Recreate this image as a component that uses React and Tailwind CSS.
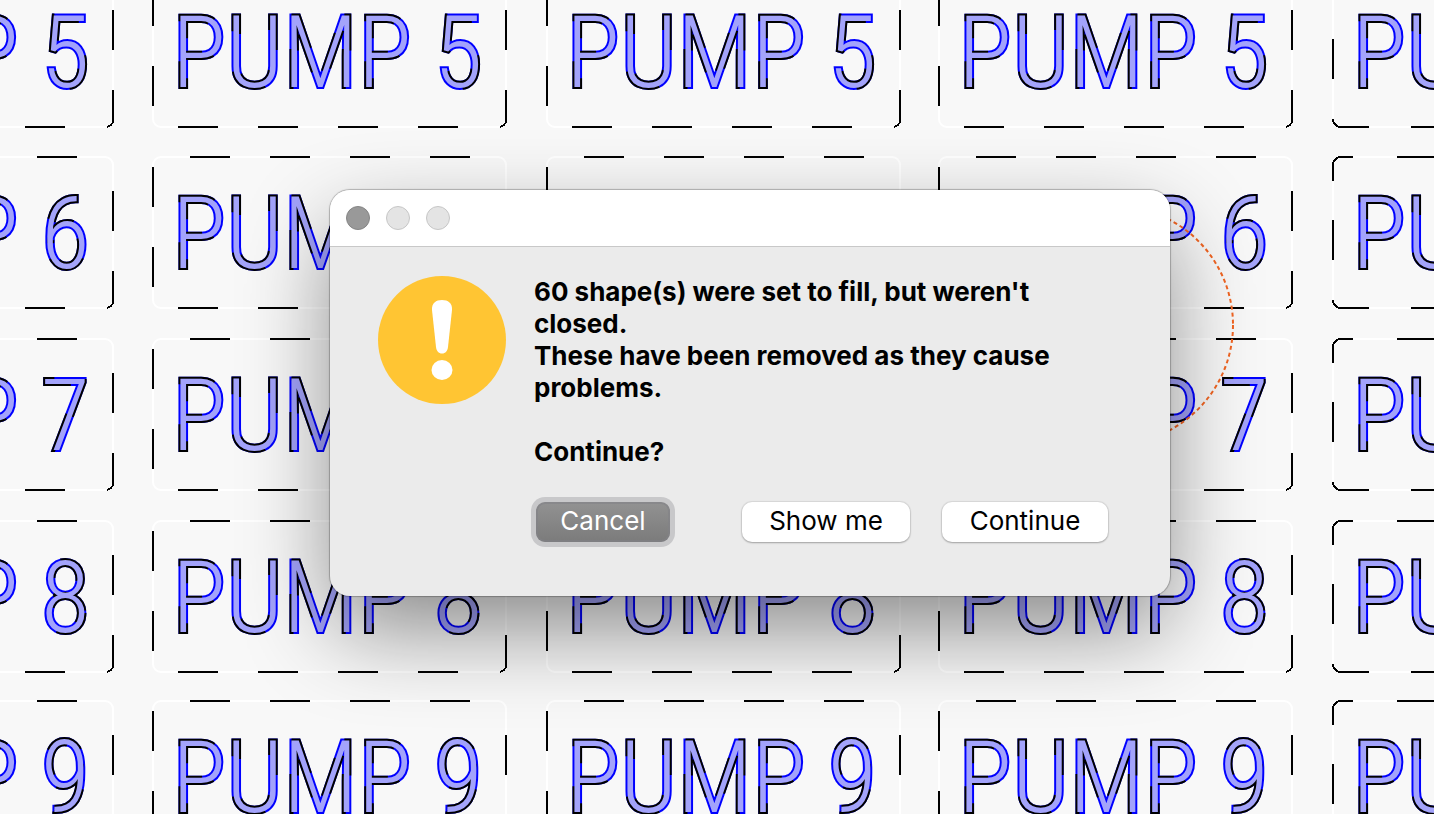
const COLUMNS = [-240, 153, 547, 939, 1333];
const ROWS = [
  { y: -24, label: "PUMP 5" },
  { y: 157, label: "PUMP 6" },
  { y: 339, label: "PUMP 7" },
  { y: 521, label: "PUMP 8" },
  { y: 701, label: "PUMP 9" },
];

// marching-ants segments of one plate outline
const ANTS = "M37 0H345M353 34V144A7 7 0 0 1 346 151M25 151H345M0 10V140";
const ANTS_LAST =
  "M0 24V8A8 8 0 0 1 8 0H24M64 0H353M0 63V103M0 143A8 8 0 0 0 8 151H38M78 151H353";

export default function App() {
  return (
    <main className="relative flex h-screen items-start justify-center overflow-hidden bg-[#f8f8f8] pt-[190px] pl-[66px] font-['Inter',sans-serif]">
      <Workspace />
      <AlertDialog />
    </main>
  );
}

function Workspace() {
  return (
    <svg className="absolute inset-0 h-full w-full" aria-label="Design canvas">
      {ROWS.map((row) =>
        COLUMNS.map((x, index) => (
          <Plate
            key={`${row.label}-${x}`}
            x={x}
            y={row.y}
            label={row.label}
            ants={index === COLUMNS.length - 1 ? ANTS_LAST : ANTS}
          />
        ))
      )}
      <circle
        cx="1114"
        cy="325"
        r="119"
        fill="none"
        stroke="#f26522"
        strokeWidth="2"
        strokeDasharray="4 3"
      />
    </svg>
  );
}

function Plate({ x, y, label, ants }) {
  return (
    <g transform={`translate(${x} ${y})`}>
      <rect
        width="353"
        height="151"
        rx="8"
        fill="none"
        stroke="#ffffff"
        strokeWidth="2"
      />
      <path
        d={ants}
        fill="none"
        stroke="#000000"
        strokeWidth="2"
        strokeDasharray="40 40"
        shapeRendering="crispEdges"
      />
      {/* fill goes over the strokes so overlapping contours stay hidden */}
      <g
        className="font-['Roboto_Condensed','Roboto',sans-serif] text-[100px] font-light"
        strokeWidth="4"
      >
        <text x="19" y="111" fill="none" stroke="#0000ff" aria-hidden="true">
          {label}
        </text>
        <text
          x="19"
          y="111"
          fill="#a3a3fb"
          stroke="#000000"
          strokeDasharray="40 40"
          paintOrder="stroke"
        >
          {label}
        </text>
      </g>
    </g>
  );
}

function AlertDialog() {
  return (
    <section
      role="alertdialog"
      aria-labelledby="alert-message"
      className="relative w-full max-w-[840px] overflow-hidden rounded-[20px] bg-[#ebebeb] shadow-[0_0_1px_1px_rgba(0,0,0,0.25),0_36px_90px_-4px_rgba(0,0,0,0.46)]"
    >
      <header className="flex h-14 items-center gap-4 bg-white px-4">
        <button
          aria-label="Close"
          className="size-6 rounded-full border border-[#858585] bg-[#999999]"
        />
        <button
          aria-label="Minimize"
          className="size-6 rounded-full border border-[#c6c6c6] bg-[#e4e4e4]"
        />
        <button
          aria-label="Zoom"
          className="size-6 rounded-full border border-[#c6c6c6] bg-[#e4e4e4]"
        />
      </header>

      <div className="flex gap-7 border-t border-[#c8c8c8] pt-[29px] pr-[62px] pb-[54px] pl-12">
        <WarningIcon />
        <div className="flex-1">
          <div
            id="alert-message"
            className="text-[26px] leading-8 font-bold text-black"
          >
            <p>60 shape(s) were set to fill, but weren't closed.</p>
            <p>These have been removed as they cause problems.</p>
            <p className="mt-8">Continue?</p>
          </div>
          <div className="mt-[34px] flex pl-0.5 text-[26px] leading-8">
            <button className="h-10 w-[134px] rounded-[9px] bg-linear-to-b from-[#929292] to-[#7b7b7b] pb-0.5 text-white shadow-[inset_0_0_0_2px_rgba(130,130,135,0.6),0_0_0_5px_#c8c8ca]">
              Cancel
            </button>
            <button className="ml-auto h-10 w-[168px] rounded-[10px] bg-white pb-0.5 text-black shadow-[0_0_1px_1px_rgba(0,0,0,0.08),0_1px_2px_rgba(0,0,0,0.25)]">
              Show me
            </button>
            <button className="ml-8 h-10 w-[166px] rounded-[10px] bg-white pb-0.5 text-black shadow-[0_0_1px_1px_rgba(0,0,0,0.08),0_1px_2px_rgba(0,0,0,0.25)]">
              Continue
            </button>
          </div>
        </div>
      </div>
    </section>
  );
}

function WarningIcon() {
  return (
    <svg viewBox="0 0 128 128" className="size-32 shrink-0" aria-hidden="true">
      <circle cx="64" cy="64" r="64" fill="#ffc533" />
      <path
        d="M64 24C70 24 74.500 27 74 34L70 71C69.500 75 67.500 77.500 64 77.500C60.500 77.500 58.500 75 58 71L54 34C53.500 27 58 24 64 24Z"
        fill="#ffffff"
      />
      <ellipse cx="64" cy="94" rx="10.500" ry="10" fill="#ffffff" />
    </svg>
  );
}
